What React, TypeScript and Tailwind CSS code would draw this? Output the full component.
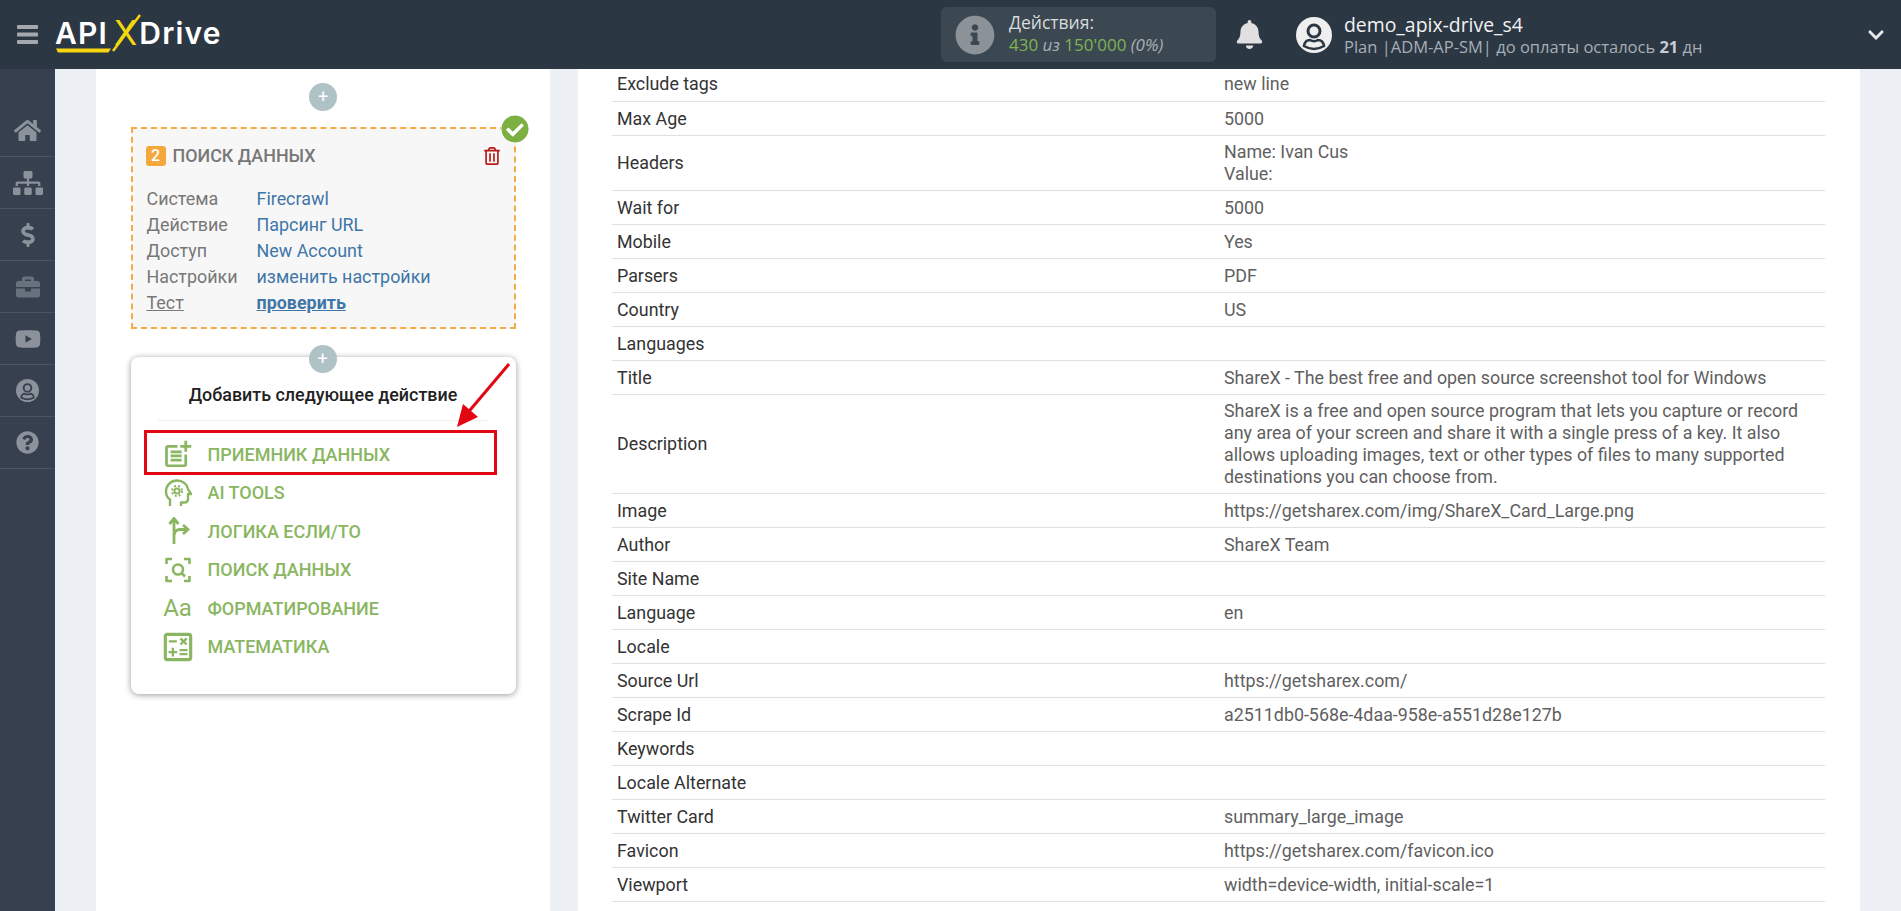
import React from "react";
import { FaHome, FaSitemap, FaDollarSign, FaBriefcase, FaYoutube, FaQuestionCircle, FaBell, FaInfoCircle, FaCheckCircle, FaRegTrashAlt, FaChevronDown } from "react-icons/fa";
import { MdOutlinePostAdd, MdOutlineCalculate } from "react-icons/md";

const rows: [string, string[]][] = [
  ["Max Age", ["5000"]],
  ["Headers", ["Name: Ivan Cus", "Value:"]],
  ["Wait for", ["5000"]],
  ["Mobile", ["Yes"]],
  ["Parsers", ["PDF"]],
  ["Country", ["US"]],
  ["Languages", [""]],
  ["Title", ["ShareX - The best free and open source screenshot tool for Windows"]],
  ["Description", [
    "ShareX is a free and open source program that lets you capture or record",
    "any area of your screen and share it with a single press of a key. It also",
    "allows uploading images, text or other types of files to many supported",
    "destinations you can choose from.",
  ]],
  ["Image", ["https://getsharex.com/img/ShareX_Card_Large.png"]],
  ["Author", ["ShareX Team"]],
  ["Site Name", [""]],
  ["Language", ["en"]],
  ["Locale", [""]],
  ["Source Url", ["https://getsharex.com/"]],
  ["Scrape Id", ["a2511db0-568e-4daa-958e-a551d28e127b"]],
  ["Keywords", [""]],
  ["Locale Alternate", [""]],
  ["Twitter Card", ["summary_large_image"]],
  ["Favicon", ["https://getsharex.com/favicon.ico"]],
  ["Viewport", ["width=device-width, initial-scale=1"]],
];

function Row({ label, lines, short }: { label: string; lines: string[]; short?: boolean }) {
  return (
    <div className={`flex items-center border-b border-[#e0e0e0] text-[17.85px] leading-[22px] ${short ? "h-[33px] pb-[2px]" : "min-h-[34px] py-[5px]"}`}>
      <div className="w-[612px] pl-[5px] pr-2 text-[#333]">{label}</div>
      <div className="flex-1 whitespace-nowrap text-[#5f5f5f]">
        {lines.map((l, i) => <div key={i}>{l || "\u00a0"}</div>)}
      </div>
    </div>
  );
}

function UserIcon({ size, bg, fg }: { size: number; bg: string; fg: string }) {
  return (
    <svg width={size} height={size} viewBox="0 0 36 36" className="shrink-0">
      <circle cx="18" cy="18" r="18" fill={bg} />
      <circle cx="18" cy="14" r="6" fill="none" stroke={fg} strokeWidth="3" />
      <path d="M8 29 Q9 23 14 23 Q18 25.5 22 23 Q27 23 28 29 Q18 35 8 29 Z" fill="none" stroke={fg} strokeWidth="2.6" />
    </svg>
  );
}

const sideIcons = [
  <FaHome size={27} className="text-[#8b929b]" />,
  <FaSitemap size={30} className="text-[#8b929b]" />,
  <FaDollarSign size={24} className="text-[#8b929b]" />,
  <FaBriefcase size={24} className="text-[#68717d]" />,
  <FaYoutube size={26} className="text-[#8b929b]" />,
  <UserIcon size={23} bg="#8b929b" fg="#36404f" />,
  <FaQuestionCircle size={23} className="text-[#8b929b]" />,
];

function Plus({ className = "" }: { className?: string }) {
  return (
    <div className={`flex h-[28px] w-[28px] items-center justify-center rounded-full bg-[#afc2c6] text-[18px] leading-none text-white ${className}`}>+</div>
  );
}

const green = "text-[#8ab662]";

function Item({ icon, label }: { icon: React.ReactNode; label: string }) {
  return (
    <div className="flex h-[38.5px] items-center pl-[33px]">
      <div className="flex w-[28px] items-center justify-center">{icon}</div>
      <span className={`ml-[16px] text-[18px] font-medium uppercase ${green}`}>{label}</span>
    </div>
  );
}

export default function App() {
  return (
    <div className="flex h-screen flex-col overflow-hidden font-['Roboto',sans-serif]">
      <header className="flex h-[69px] shrink-0 items-center bg-[#2c3744] text-white">
        <svg className="ml-[17px] shrink-0" width="21" height="19" viewBox="0 0 21 19" fill="#a4a9af">
          <rect y="0" width="21" height="4" rx="1" />
          <rect y="7.5" width="21" height="4" rx="1" />
          <rect y="15" width="21" height="4" rx="1" />
        </svg>
        <div className="relative ml-[17px] flex h-[50px] w-[170px] shrink-0 items-center pb-[3px] font-['Inter',sans-serif] text-[30px] font-semibold leading-none tracking-[1.2px]">
          <span>API</span>
          <span className="ml-[6px] text-[34px] font-normal tracking-normal text-[#f7d511]">X</span>
          <span className="ml-[2px]">Drive</span>
          <svg className="absolute left-0 top-[4px]" width="90" height="44" viewBox="0 0 90 44">
            <path d="M1 34.5 H56 L53.5 38.5 H3 Z" fill="#f7d511" />
            <path d="M58 37 L85 1" stroke="#f7d511" strokeWidth="2.5" />
          </svg>
        </div>

        <div className="ml-[716px] flex h-[55px] w-[275px] shrink-0 items-center rounded-[6px] bg-[#3b4851] pl-[14px]">
          <FaInfoCircle size={40} className="text-[#8b9398]" />
          <div className="ml-[14px] font-['Open_Sans',sans-serif] leading-[22px]">
            <div className="-mt-[2px] mb-[1px] text-[17.5px] text-[#d8dbde]">Действия:</div>
            <div className="text-[17px] text-[#7fb356]">430 <i className="text-[#a9b0b5]">из</i> 150'000 <i className="text-[#a9b0b5]">(0%)</i></div>
          </div>
        </div>
        <FaBell size={29} className="ml-[19px] shrink-0 text-[#e0e0e0]" />
        <div className="ml-[32px]"><UserIcon size={36} bg="#efefef" fg="#2c3744" /></div>
        <div className="ml-[12px] whitespace-nowrap font-['Open_Sans',sans-serif]">
          <div className="text-[19.4px] leading-[23px] text-[#f2f2f2]">demo_apix-drive_s4</div>
          <div className="text-[16.5px] leading-[21px] text-[#a7aeb5]">Plan |ADM-AP-SM| до оплаты осталось <b className="text-[#c9cdd1]">21</b> дн</div>
        </div>
        <div className="flex-1" />
        <FaChevronDown size={18} className="mr-[16px] text-[#e8e8e8]" />
      </header>

      <div className="flex min-h-0 flex-1">
        <aside className="w-[55px] shrink-0 bg-[#36404f] pt-[36px]">
          {sideIcons.map((icon, i) => (
            <div key={i} className="flex h-[52px] items-center justify-center border-b border-[#4a5462]">
              {icon}
            </div>
          ))}
        </aside>

        <main className="flex min-w-0 flex-1 gap-[28px] bg-[#edf1f6] pl-[41px] pr-[41px]">
          <section className="flex w-[454px] shrink-0 flex-col items-center bg-white pt-[14px]">
            <Plus />
            <div className="relative mt-[16px] h-[202px] w-[385px] border-2 border-dashed border-[#f5ab48] bg-[#f7f7f7] pl-[14px] pt-[14px]">
              <FaCheckCircle size={28} className="absolute right-[-15px] top-[-14px] rounded-full bg-white text-[#7cb043]" />
              <div className="flex items-center text-[#777]">
                <span className="ml-[-1px] flex h-[20px] w-[20px] items-center justify-center rounded-[3px] bg-[#f5a93c] text-[16px] font-medium leading-none text-white">2</span>
                <span className="ml-[7px] text-[17.9px] font-medium uppercase">Поиск данных</span>
                <FaRegTrashAlt size={18} className="ml-[auto] mr-[13px] text-[#b71c1c]" />
              </div>
              <div className="mt-[16px] grid grid-cols-[110px_1fr] text-[17.9px] leading-[26px]">
                <span className="text-[#777]">Система</span><span className="text-[#3f76a8]">Firecrawl</span>
                <span className="text-[#777]">Действие</span><span className="text-[#3f76a8]">Парсинг URL</span>
                <span className="text-[#777]">Доступ</span><span className="text-[#3f76a8]">New Account</span>
                <span className="text-[#777]">Настройки</span><span className="text-[#3f76a8]">изменить настройки</span>
                <span className="text-[#777] underline">Тест</span><span className="font-bold text-[#3f76a8] underline">проверить</span>
              </div>
            </div>

            <div className="relative mt-[28px] h-[337px] w-[385px] rounded-[8px] bg-white shadow-[0_1px_6px_rgba(0,0,0,0.4)]">
              <Plus className="absolute left-[178px] top-[-12px]" />
              <div className="mx-[27px] flex h-[64px] items-end justify-center border-b border-[#eeeeee] pb-[11px] text-[17.9px] font-medium text-[#222]">
                Добавить следующее действие
              </div>
              <div className="pt-[14px]">
                <Item label="Приемник данных" icon={<MdOutlinePostAdd size={33} className={`shrink-0 ${green}`} />} />
                <Item label="AI Tools" icon={
                  <svg width="28" height="28" viewBox="0 0 28 28" fill="none" stroke="#8ab662" strokeWidth="2.4" strokeLinejoin="round">
                    <path d="M6 27 V20.5 C3 18.5 2 15.5 2 12.5 C2 6 7 1.5 13 1.5 C19 1.5 23.5 5.5 24 10 L27 15 H24 V20 Q24 23.5 20 23.5 H17 V27" />
                    <circle cx="13" cy="12" r="2.6" strokeWidth="2" />
                    <circle cx="13" cy="12" r="5" strokeWidth="2" strokeDasharray="2 2" />
                  </svg>
                } />
                <Item label="Логика Если/То" icon={
                  <svg width="28" height="28" viewBox="0 0 28 28" fill="none" stroke="#8ab662" strokeWidth="2.8">
                    <path d="M10 27 V2 M5.5 7 L10 1.5 L14.5 7 M10 18 Q11 12.5 16 12.5 H23 M19 8 L24 12.5 L19 17" />
                  </svg>
                } />
                <Item label="Поиск данных" icon={
                  <svg width="28" height="28" viewBox="0 0 28 28" fill="none" stroke="#8ab662" strokeWidth="2.6" strokeLinejoin="round">
                    <path d="M2.5 8 V3 H8 M20 3 H25.5 V8 M25.5 20 V25 H20 M8 25 H2.5 V20" />
                    <circle cx="14" cy="13.5" r="5" />
                    <path d="M17.5 17 L21 20.5" />
                  </svg>
                } />
                <Item label="Форматирование" icon={<span className={`text-[24px] leading-none ${green}`}>Aa</span>} />
                <Item label="Математика" icon={<MdOutlineCalculate size={38} className={`shrink-0 ${green}`} />} />
              </div>
              <div className="absolute left-[13px] top-[73px] h-[45px] w-[353px] border-[3px] border-[#e30613]" />
              <svg className="absolute left-[320px] top-[5px]" width="60" height="68" viewBox="0 0 60 68">
                <path d="M58 2 L14 54" stroke="#e30613" strokeWidth="3" />
                <path d="M6 65 L12 42 L27 55 Z" fill="#e30613" />
              </svg>
            </div>
          </section>

          <section className="min-w-0 flex-1 overflow-hidden bg-white pl-[34px] pr-[35px]">
            <Row short label="Exclude tags" lines={["new line"]} />
            {rows.map(([l, v]) => <Row key={l} label={l} lines={v} />)}
          </section>
        </main>
      </div>
    </div>
  );
}
